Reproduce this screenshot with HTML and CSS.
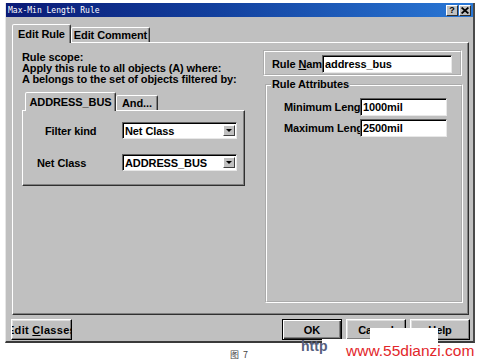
FILE: index.html
```html
<!DOCTYPE html>
<html lang="en">
<head>
<meta charset="utf-8">
<title>Max-Min Length Rule</title>
<link rel="stylesheet" href="styles.css">
</head>
<body>
<div class="window">
  <div class="titlebar">
    <span class="title">Max-Min Length Rule</span>
    <div class="tbtns">
      <span class="tbtn">?</span>
      <span class="tbtn">
        <svg width="8" height="7" viewBox="0 0 8 7"><path d="M0.6 0.5 L7.4 6.5 M7.4 0.5 L0.6 6.5" stroke="#000" stroke-width="1.7" fill="none"/></svg>
      </span>
    </div>
  </div>
  <div class="client">
    <div class="tabs">
      <div class="tab tab-active tab-rule">Edit Rule</div>
      <div class="tab tab-comment">Edit Comment</div>
    </div>
    <div class="panel">
      <div class="leftcol">
        <div class="scope">
          <div>Rule scope:</div>
          <div>Apply this rule to all objects (A) where:</div>
          <div>A belongs to the set of objects filtered by:</div>
        </div>
        <div class="tabs inner-tabs">
          <div class="tab tab-active tab-bus">ADDRESS_BUS</div>
          <div class="tab tab-and">And...</div>
        </div>
        <div class="inner-panel">
          <div class="frow frow-filter">
            <span class="flbl">Filter kind</span>
            <div class="select"><span class="sel-text">Net Class</span><span class="arrow"><span class="tri"></span></span></div>
          </div>
          <div class="frow frow-net">
            <span class="flbl">Net Class</span>
            <div class="select"><span class="sel-text">ADDRESS_BUS</span><span class="arrow"><span class="tri"></span></span></div>
          </div>
        </div>
      </div>
      <div class="rightcol">
        <div class="namebox">
          <span class="clip-lbl name-lbl">Rule <u>N</u>ame</span>
          <div class="field name-field">address_bus</div>
        </div>
        <fieldset class="group">
          <legend class="group-title">Rule Attributes</legend>
          <div class="group-body">
            <div class="arow"><span class="clip-lbl attr-lbl">Minimum Length</span><div class="field attr-field">1000mil</div></div>
            <div class="arow"><span class="clip-lbl attr-lbl">Maximum Length</span><div class="field attr-field">2500mil</div></div>
          </div>
        </fieldset>
      </div>
    </div>
    <div class="buttons">
      <div class="btn btn-classes"><span class="btn-text btn-text-wide">Edit <u>C</u>lasses</span></div>
      <div class="btn btn-default btn-ok"><span class="btn-text">OK</span></div>
      <div class="btn btn-cancel"><span class="btn-text">Cancel</span></div>
      <div class="btn btn-help"><span class="btn-text">Help</span></div>
    </div>
  </div>
</div>
<div class="caption">图 7</div>
<div class="watermark">
  <div class="wm-cover wm-cover-a"></div>
  <div class="wm-cover wm-cover-b"></div>
  <span class="wm-http">http</span>
  <span class="wm-site">www.55dianzi.com</span>
</div>
</body>
</html>
```
FILE: styles.css
```css
* { box-sizing: border-box; }
html, body { margin: 0; padding: 0; background: #fff; }
body {
  width: 480px;
  height: 363px;
  overflow: hidden;
  position: relative;
  font-family: "Liberation Sans", Arial, sans-serif;
  font-size: 11px;
  font-weight: bold;
  color: #000;
  letter-spacing: -0.1px;
}

.window {
  margin: 3px 5px 0 5px;
  width: 470px;
  height: 340px;
  background: #c0c0c0;
  border-left: 1px solid #e6e6e6;
  border-right: 2px solid #4a4a4a;
  border-bottom: 2px solid #3a3a3a;
  display: flex;
  flex-direction: column;
}

.titlebar {
  height: 14px;
  background: linear-gradient(to right, #0a1a76 0%, #12409e 45%, #2a78d6 100%);
  display: flex;
  align-items: center;
  justify-content: space-between;
  padding: 0 2px 0 2px;
}
.title {
  font-family: "DejaVu Sans Mono", monospace;
  font-size: 8px;
  font-weight: normal;
  letter-spacing: 0;
  color: #fff;
}
.tbtns { display: flex; gap: 1px; }
.tbtn {
  width: 12px;
  height: 11px;
  background: #c0c0c0;
  border: 1px solid;
  border-color: #fff #303030 #303030 #fff;
  font-size: 9px;
  line-height: 9px;
  display: flex;
  align-items: center;
  justify-content: center;
}

.client {
  flex: 1;
  padding: 7px 4px 0 6px;
  display: flex;
  flex-direction: column;
}

.tabs {
  display: flex;
  height: 18px;
  align-items: flex-end;
  position: relative;
}
.tab {
  height: 15px;
  border: 1px solid;
  border-bottom: none;
  border-color: #fff #303030 transparent #fff;
  border-radius: 2px 2px 0 0;
  box-shadow: inset -1px 0 #808080;
  background: #c0c0c0;
  display: flex;
  align-items: center;
  justify-content: center;
  white-space: nowrap;
}
.tab-active { height: 19px; margin-bottom: -1px; }
.tab-rule { width: 59px; }
.tab-comment { width: 79px; }

.panel {
  height: 273px;
  border: 1px solid;
  border-color: #fff #303030 #303030 #fff;
  box-shadow: inset -1px -1px #808080;
  display: flex;
  align-items: flex-start;
  gap: 18px;
  padding: 7px 5px 0 9px;
}

.leftcol { width: 223px; display: flex; flex-direction: column; }
.scope { line-height: 11px; padding-top: 2px; white-space: nowrap; }

.inner-tabs { margin-top: 7px; padding-left: 3px; }
.tab-bus { width: 91px; }
.tab-and { width: 42px; }

.inner-panel {
  height: 76px;
  border: 1px solid;
  border-color: #fff #303030 #303030 #fff;
  box-shadow: inset -1px -1px #808080;
  display: flex;
  flex-direction: column;
  gap: 15px;
  padding: 11px 7px 0 0;
}
.frow { display: flex; align-items: center; height: 17px; }
.frow-filter { padding-left: 22px; }
.frow-net { padding-left: 14px; }
.select {
  margin-left: auto;
  width: 115px;
  height: 17px;
  background: #fff;
  border: 1px solid;
  border-color: #606060 #e8e8e8 #e8e8e8 #606060;
  box-shadow: inset 1px 1px #000;
  display: flex;
  align-items: center;
  justify-content: space-between;
  padding: 0 1px 0 2px;
}
.arrow {
  width: 12px;
  height: 11px;
  background: #c0c0c0;
  border: 1px solid;
  border-color: #fff #404040 #404040 #fff;
  display: flex;
  align-items: center;
  justify-content: center;
}
.tri {
  width: 0;
  height: 0;
  border-left: 3px solid transparent;
  border-right: 3px solid transparent;
  border-top: 3px solid #000;
}

.rightcol { width: 200px; display: flex; flex-direction: column; }
.namebox {
  width: 199px;
  height: 26px;
  border: 2px groove #fff;
  display: flex;
  align-items: flex-start;
  padding: 3px 8px 0 7px;
}
.clip-lbl { overflow: hidden; white-space: nowrap; flex: none; }
.name-lbl { width: 50px; line-height: 18px; }
.field {
  height: 18px;
  background: #fff;
  border: 1px solid;
  border-color: #606060 #e8e8e8 #e8e8e8 #606060;
  box-shadow: inset 1px 1px #000;
  display: flex;
  align-items: center;
  padding-left: 2px;
  white-space: nowrap;
}
.name-field { width: 130px; }

.group {
  margin: 2px 0 0 2px;
  width: 198px;
  height: 225px;
  border: 2px groove #fff;
  padding: 0;
}
.group-title { padding: 0 1px; margin-left: 4px; line-height: 13px; }
.group-body {
  padding: 7px 0 0 17px;
  display: flex;
  flex-direction: column;
  gap: 3px;
}
.arow { display: flex; align-items: center; height: 18px; }
.attr-lbl { width: 76px; }
.attr-field { width: 87px; }

.buttons { display: flex; margin-top: 4px; height: 21px; }
.btn {
  height: 21px;
  background: #c0c0c0;
  border: 1px solid;
  border-color: #fff #000 #000 #fff;
  box-shadow: inset -1px -1px #808080, inset 1px 1px #dfdfdf;
  display: flex;
  align-items: center;
  justify-content: center;
  overflow: hidden;
  white-space: nowrap;
}
.btn-text { flex: none; }
.btn-text-wide { letter-spacing: 0.3px; }
.btn-classes { width: 61px; margin-left: -1px; }
.btn-ok { width: 60px; margin-left: auto; }
.btn-cancel { width: 60px; margin-left: 4px; }
.btn-help { width: 60px; margin-left: 4px; margin-right: -1px; }
.btn-default {
  border: 1px solid #000;
  box-shadow: inset 1px 1px #fff, inset -1px -1px #303030, inset -2px -2px #808080;
}

.caption {
  margin-top: 6px;
  padding-left: 230px;
  font-family: "Noto Sans CJK SC", "Liberation Sans", sans-serif;
  font-size: 9px;
  line-height: 12px;
  font-weight: normal;
  color: #444;
  letter-spacing: 1px;
}

.watermark { position: absolute; left: 0; top: 0; width: 480px; height: 363px; pointer-events: none; }
.wm-cover { position: absolute; background: #fff; }
.wm-cover-a { left: 370px; top: 328px; width: 68px; height: 15px; }
.wm-cover-b { left: 322px; top: 339px; width: 116px; height: 5px; }
.wm-http {
  position: absolute;
  left: 301px;
  top: 338px;
  font-size: 14px;
  line-height: 16px;
  font-weight: bold;
  color: #56607e;
  letter-spacing: 0;
}
.wm-site {
  position: absolute;
  left: 346px;
  top: 343px;
  font-size: 15.5px;
  line-height: 16px;
  font-weight: normal;
  color: #e2262a;
  letter-spacing: 0;
}
```
